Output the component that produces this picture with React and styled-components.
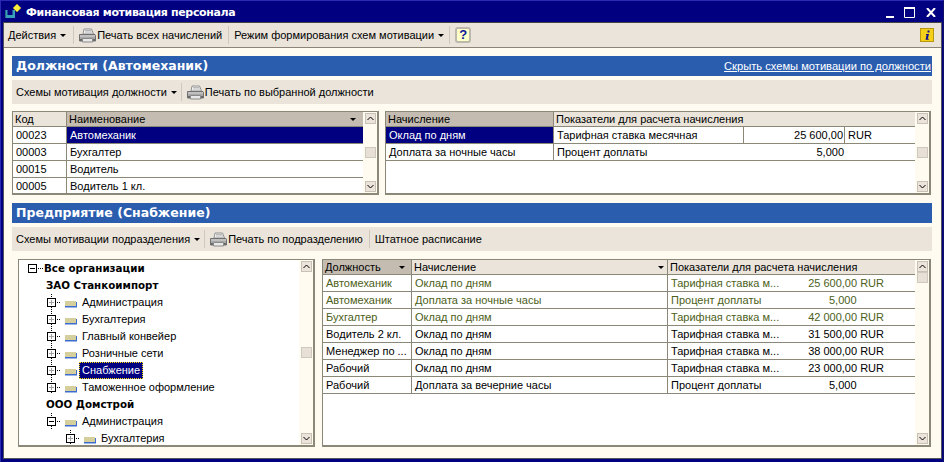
import React from "react";
import styled, { createGlobalStyle } from "styled-components";

const Global = createGlobalStyle`
  html, body { margin: 0; padding: 0; background: #000080; }
  #root { width: 944px; height: 462px; overflow: hidden; }
  * { box-sizing: border-box; }
`;

const UI = `"Liberation Sans", Arial, sans-serif`;
const WIDE = `"DejaVu Sans", Verdana, sans-serif`;
const LINE = "#8c8878";
const PANEL = "#eae4da";
const PAPER = "#fffbf0";

const Win = styled.div`
  width: 944px; height: 462px; display: flex; flex-direction: column;
  background: #000080;
  border-top: 1px solid #2a2ab4;
  border-left: 1px solid #2a2ab4;
  border-right: 1px solid #10106a;
  padding: 0 1px 3px 2px;
  font: 11px ${UI}; color: #000;
`;
const TitleBar = styled.div`
  height: 21px; flex: none; display: flex; align-items: center; color: #fff;
  padding: 2px 6px 0 2px;
`;
const TitleText = styled.span`
  font: bold 11px/16px ${WIDE}; margin-left: 3px; letter-spacing: -0.35px; flex: 1;
`;
const WinButtons = styled.div`display: flex; align-items: center;`;
const Client = styled.div`
  flex: 1; display: flex; flex-direction: column; background: ${PAPER};
  border: 1px solid #555; border-top-color: #444;
  min-height: 0;
`;
const MainBar = styled.div`
  height: 25px; flex: none; display: flex; align-items: center; background: ${PANEL};
  border-bottom: 1px solid #8c8478; padding: 0 7px 0 4px;
`;
const Content = styled.div`
  flex: 1; padding: 8px 9px 0 8px; display: flex; flex-direction: column; min-height: 0;
`;
const SectionHead = styled.div`
  height: 20px; flex: none; background: #2b5daf; color: #fff; display: flex; align-items: center;
  justify-content: space-between; padding: 0 1px 0 4px;
  margin-top: ${p => p.$gap || 0}px;
`;
const SectionTitle = styled.span`font: bold 12.5px/20px ${WIDE};`;
const HideLink = styled.a`font: 11.15px/18px ${UI}; color: #fff; text-decoration: underline; cursor: pointer;`;
const SubBar = styled.div`
  height: 24px; flex: none; margin-top: 4px; display: flex; align-items: center; background: ${PANEL};
  padding: 0 4px;
`;
const Tool = styled.span`
  display: inline-flex; align-items: center; white-space: nowrap; font: 11px/16px ${UI};
`;
const Arrow = styled.i`
  display: inline-block; margin-left: 4px; width: 0; height: 0;
  border-left: 3px solid transparent; border-right: 3px solid transparent; border-top: 3px solid #000;
`;
const Sep = styled.span`
  width: 1px; height: 18px; background: #cfc9bd; margin: 0 5px 0 ${p => p.$l ?? 6}px; flex: none;
`;
const Spring = styled.div`flex: 1;`;
const HelpBtn = styled.span`
  width: 16px; height: 16px; display: flex; align-items: center; justify-content: center;
  background: #ffffc8; border: 2px solid #bcb8ac; border-radius: 3px; color: #0a1a98;
  font: bold 13px/12px ${UI};
`;
const Split = styled.div`display: flex; gap: 6px; margin-top: 7px; height: 84px; flex: none;`;
const Lower = styled.div`display: flex; gap: 7px; margin-top: 8px; padding-left: 6px; height: 188px; flex: none;`;
const Frame = styled.div`
  width: ${p => p.$w}px; flex: none; display: flex; background: #fff; min-height: 0;
  border: solid ${LINE}; border-width: 1px 2px 2px 1px;
`;
const Grid = styled.div`flex: 1; min-width: 0; overflow: hidden;`;
const Row = styled.div`
  display: grid; grid-template-columns: ${p => p.$cols}; height: 17px; border-bottom: 1px solid ${LINE};
`;
const HeadRow = styled(Row)`height: 15px;`;
const HCell = styled.div`
  background: ${p => (p.$sorted ? "#c4bcb0" : PANEL)}; padding: 0 0 0 2px; font: 11px/15px ${UI};
  border-right: 1px solid ${LINE}; display: flex; justify-content: space-between; align-items: center;
  white-space: nowrap; overflow: hidden;
  &:last-child { border-right: 0; }
`;
const SortArrow = styled(Arrow)`margin: 0 ${p => p.$m || 7}px 0 0; flex: none;`;
const Cell = styled.div`
  padding: 0 ${p => (p.$right ? "1px" : "3px")} 0 3px; font: 11px/16px ${UI}; white-space: nowrap; overflow: hidden;
  border-right: ${p => (p.$open ? "0" : `1px solid ${LINE}`)};
  text-align: ${p => (p.$right ? "right" : "left")};
  background: ${p => (p.$sel ? "#000080" : "transparent")};
  color: ${p => (p.$sel ? "#fff" : p.$green ? "#4c6020" : "#000")};
  &:last-child { border-right: 0; }
`;
const Scroll = styled.div`
  width: 14px; flex: none; background: ${PAPER}; display: flex; flex-direction: column; align-items: center;
  padding: 1px 0;
`;
const ScrollBtn = styled.div`
  width: 11px; height: 11px; background: #eae4da; border: 1px solid #c8c2b6; flex: none;
  display: flex; align-items: center; justify-content: center;
`;
const Thumb = styled.div`
  width: 11px; height: 11px; background: #e6e0d6; border: 1px solid #cfc9bd; flex: none;
  margin-top: ${p => (p.$top ? "0" : "auto")}; margin-bottom: auto;
`;
const Tree = styled.div`flex: 1; min-width: 0; overflow: hidden; background: #fff;`;
const TreeRow = styled.div`
  height: 17px; display: flex; align-items: center; padding-left: ${p => p.$in}px;
  font: ${p => (p.$bold ? `bold 10.3px/17px ${WIDE}` : `11px/17px ${UI}`)}; white-space: nowrap;
`;
const TreeLabel = styled.span`
  padding: 0 2px; height: 17px; margin-left: 2px; line-height: 15px;
  border: 1px dotted ${p => (p.$sel ? "#ffe000" : "transparent")};
  background: ${p => (p.$sel ? "#000080" : "transparent")};
  color: ${p => (p.$sel ? "#fff" : "#000")};
`;
const LowGrid = styled.div`display: grid; grid-template-columns: 1fr 83px; padding-right: 28px;`;
const Num = styled.span`
  display: block; text-align: ${p => (p.$short ? "left" : "right")};
  padding-left: ${p => (p.$short ? "28px" : "0")};
`;

const Printer = () => (
  <svg width="17" height="15" viewBox="0 0 17 15" style={{ marginRight: 1, flex: "none" }}>
    <path d="M5 1h7.5l2 5H4z" fill="#f4f4f4" stroke="#909090" />
    <path d="M6 2.5h6M6 4h7" stroke="#b8b8b8" />
    <path d="M.5 6.5h15.5l.5 1V13H.5z" fill="#a8a8a8" stroke="#707070" />
    <path d="M1 8h15" stroke="#d8d8d8" />
    <path d="M1 11h15v2H1z" fill="#6a6a6a" />
    <path d="M3.5 10.5h10V14h-10z" fill="#e8e8e8" stroke="#8a8a8a" />
  </svg>
);
const Minimize = () => (
  <svg width="10" height="11" viewBox="0 0 10 11" style={{ marginRight: 9 }}><path d="M1 9h8v2H1z" fill="#fff" /></svg>
);
const Maximize = () => (
  <svg width="12" height="11" viewBox="0 0 12 11" style={{ marginRight: 10 }}><path d="M.5 1.5h10v9H.5z" fill="none" stroke="#fff" /><path d="M0 0h11v2H0z" fill="#fff" /></svg>
);
const Close = () => (
  <svg width="10" height="9" viewBox="0 0 10 9"><path d="M1 0l8 9M9 0L1 9" stroke="#fff" strokeWidth="2" /></svg>
);
const AppIcon = () => (
  <svg width="18" height="18" viewBox="0 0 18 18" style={{ flex: "none", marginTop: -2 }}>
    <path d="M0 7h2.5v5h5V7H10v8H0z" fill="#3aa0b8" />
    <path d="M0 7h1v8H0z" fill="#1c6e8a" />
    <path d="M12 1l4 4-4 4-4-4z" fill="#f8ec40" stroke="#b8a020" strokeWidth=".5" />
  </svg>
);
const InfoBtn = () => (
  <svg width="14" height="14" viewBox="0 0 14 14" style={{ flex: "none" }}>
    <rect x=".5" y=".5" width="13" height="13" fill="#f4d018" stroke="#b89810" />
    <path d="M7.5 2.5h2v2h-2zM6 6h3l-1.2 4.8h1v1H5.5l1.1-4.8H6z" fill="#10108a" />
  </svg>
);
const Up = () => (<svg width="7" height="5" viewBox="0 0 7 5"><path d="M.5 4L3.5 1l3 3" fill="none" stroke="#000" /></svg>);
const Down = () => (<svg width="7" height="5" viewBox="0 0 7 5"><path d="M.5 1L3.5 4l3-3" fill="none" stroke="#000" /></svg>);

const ScrollBar = ({ top }) => (
  <Scroll>
    <ScrollBtn><Up /></ScrollBtn>
    <Thumb $top={top} />
    <ScrollBtn><Down /></ScrollBtn>
  </Scroll>
);

/* expander box + dotted connectors + folder of a tree node */
const Node = ({ open, short }) => (
  <svg width="30" height="17" viewBox="0 0 30 17" style={{ flex: "none" }}>
    <path d={`M4.5 0V4M4.5 13V${short ? 15 : 17}`} stroke="#000" strokeDasharray="1 1" fill="none" />
    <rect x=".5" y="4.5" width="8" height="8" fill="#fff" stroke="#000" />
    {open
      ? <path d="M2 8.5h5" stroke="#000" />
      : <path d="M2 8.5h5M4.5 6v5" stroke="#a0a0a0" />}
    <path d="M10 8.5h4" stroke="#000" strokeDasharray="1 1" />
    <path d="M18 7h11v6H18z" fill="#d4cf9c" />
    <path d="M18 12h11v1.5H18z" fill="#3c6cd0" />
    <path d="M29 8h1v5.5h-1z" fill="#3c6cd0" />
  </svg>
);
const RootNode = () => (
  <svg width="16" height="17" viewBox="0 0 16 17" style={{ flex: "none" }}>
    <rect x=".5" y="4.5" width="8" height="8" fill="#fff" stroke="#000" />
    <path d="M2 8.5h5" stroke="#000" />
    <path d="M10 8.5h5" stroke="#000" strokeDasharray="1 1" />
  </svg>
);

const topL = "54px 1fr";
const topR = "168px 190px 101px 1fr";
const lowCols = "89px 256px 1fr";

const lowRows = [
  ["Автомеханик", "Оклад по дням", "Тарифная ставка м...", "25 600,00 RUR", true],
  ["Автомеханик", "Доплата за ночные часы", "Процент доплаты", "5,000", true],
  ["Бухгалтер", "Оклад по дням", "Тарифная ставка м...", "42 000,00 RUR", true],
  ["Водитель 2 кл.", "Оклад по дням", "Тарифная ставка м...", "31 500,00 RUR"],
  ["Менеджер по ...", "Оклад по дням", "Тарифная ставка м...", "38 000,00 RUR"],
  ["Рабочий", "Оклад по дням", "Тарифная ставка м...", "23 000,00 RUR"],
  ["Рабочий", "Доплата за вечерние часы", "Процент доплаты", "5,000"],
];

export default function App() {
  return (
    <Win>
      <Global />
      <TitleBar>
        <AppIcon />
        <TitleText>Финансовая мотивация персонала</TitleText>
        <WinButtons><Minimize /><Maximize /><Close /></WinButtons>
      </TitleBar>
      <Client>
        <MainBar>
          <Tool>Действия<Arrow /></Tool>
          <Sep $l={7} />
          <Tool><Printer />Печать всех начислений</Tool>
          <Sep />
          <Tool>Режим формирования схем мотивации<Arrow /></Tool>
          <Sep $l={5} />
          <HelpBtn>?</HelpBtn>
          <Spring />
          <InfoBtn />
        </MainBar>
        <Content>
          <SectionHead>
            <SectionTitle>Должности (Автомеханик)</SectionTitle>
            <HideLink>Скрыть схемы мотивации по должности</HideLink>
          </SectionHead>
          <SubBar>
            <Tool>Схемы мотивация должности<Arrow /></Tool>
            <Sep $l={4} />
            <Tool><Printer />Печать по выбранной должности</Tool>
          </SubBar>
          <Split>
            <Frame $w={367}>
              <Grid>
                <HeadRow $cols={topL}><HCell>Код</HCell><HCell $sorted>Наименование<SortArrow /></HCell></HeadRow>
                <Row $cols={topL}><Cell>00023</Cell><Cell $sel>Автомеханик</Cell></Row>
                <Row $cols={topL}><Cell>00003</Cell><Cell>Бухгалтер</Cell></Row>
                <Row $cols={topL}><Cell>00015</Cell><Cell>Водитель</Cell></Row>
                <Row $cols={topL}><Cell>00005</Cell><Cell>Водитель 1 кл.</Cell></Row>
              </Grid>
              <ScrollBar />
            </Frame>
            <Frame $w={546}>
              <Grid>
                <HeadRow $cols="168px 1fr"><HCell $sorted>Начисление</HCell><HCell>Показатели для расчета начисления</HCell></HeadRow>
                <Row $cols={topR}><Cell $sel>Оклад по дням</Cell><Cell>Тарифная ставка месячная</Cell><Cell $right>25 600,00</Cell><Cell>RUR</Cell></Row>
                <Row $cols={topR}><Cell>Доплата за ночные часы</Cell><Cell $open>Процент доплаты</Cell><Cell $right $open>5,000</Cell><Cell /></Row>
              </Grid>
              <ScrollBar />
            </Frame>
          </Split>
          <SectionHead $gap={8}>
            <SectionTitle>Предприятие (Снабжение)</SectionTitle>
          </SectionHead>
          <SubBar>
            <Tool>Схемы мотивации подразделения<Arrow /></Tool>
            <Sep $l={4} />
            <Tool><Printer />Печать по подразделению</Tool>
            <Sep />
            <Tool>Штатное расписание</Tool>
          </SubBar>
          <Lower>
            <Frame $w={297}>
              <Tree>
                <TreeRow $bold $in={9}><RootNode />Все организации</TreeRow>
                <TreeRow $bold $in={27}>ЗАО Станкоимпорт</TreeRow>
                {["Администрация", "Бухгалтерия", "Главный конвейер", "Розничные сети"].map(t => (
                  <TreeRow key={t} $in={28}><Node /><TreeLabel>{t}</TreeLabel></TreeRow>
                ))}
                <TreeRow $in={28}><Node /><TreeLabel $sel>Снабжение</TreeLabel></TreeRow>
                <TreeRow $in={28}><Node short /><TreeLabel>Таможенное оформление</TreeLabel></TreeRow>
                <TreeRow $bold $in={27}>ООО Домстрой</TreeRow>
                <TreeRow $in={28}><Node open /><TreeLabel>Администрация</TreeLabel></TreeRow>
                <TreeRow $in={47}><Node /><TreeLabel>Бухгалтерия</TreeLabel></TreeRow>
              </Tree>
              <ScrollBar />
            </Frame>
            <Frame $w={609}>
              <Grid>
                <HeadRow $cols={lowCols}>
                  <HCell $sorted>Должность<SortArrow $m={6} /></HCell>
                  <HCell>Начисление<SortArrow $m={3} /></HCell>
                  <HCell>Показатели для расчета начисления</HCell>
                </HeadRow>
                {lowRows.map((r, i) => (
                  <Row key={i} $cols={lowCols}>
                    <Cell $green={r[4]}>{r[0]}</Cell>
                    <Cell $green={r[4]}>{r[1]}</Cell>
                    <Cell $green={r[4]}>
                      <LowGrid>
                        <span>{r[2]}</span>
                        <Num $short={r[3].length < 6}>{r[3]}</Num>
                      </LowGrid>
                    </Cell>
                  </Row>
                ))}
              </Grid>
              <ScrollBar top />
            </Frame>
          </Lower>
        </Content>
      </Client>
    </Win>
  );
}
